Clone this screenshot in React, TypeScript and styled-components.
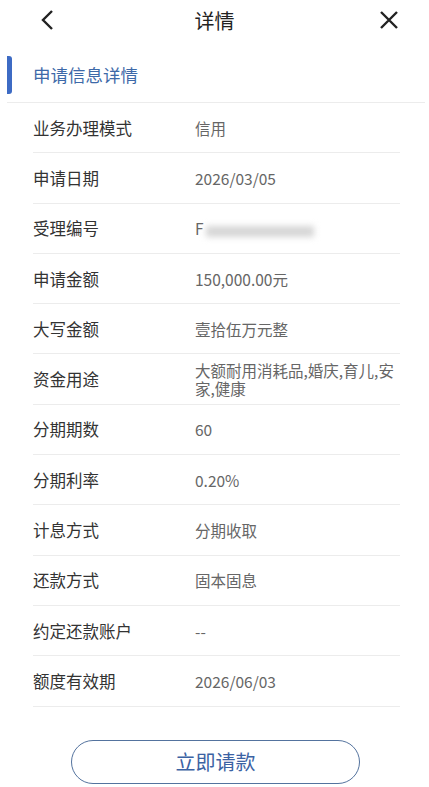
import React from "react";
import styled, { createGlobalStyle } from "styled-components";

const GlobalStyle = createGlobalStyle`
  body {
    margin: 0;
    background: #fff;
    font-family: "Noto Sans CJK SC", "Noto Sans", sans-serif;
  }
`;

const Page = styled.div`
  width: 429px;
  height: 787px;
  overflow: hidden;
  background: #fff;
`;

const TopBar = styled.header`
  height: 40px;
  display: grid;
  grid-template-columns: 60px 1fr 60px;
  align-items: center;
`;

const Title = styled.h1`
  margin: 0;
  text-align: center;
  font-size: 20px;
  font-weight: 400;
  color: #222;
`;

const IconBox = styled.div<{ $right?: boolean }>`
  display: flex;
  justify-content: ${(p) => (p.$right ? "flex-start" : "flex-end")};
  padding: ${(p) => (p.$right ? "0 0 0 10px" : "0 4px 0 0")};
`;

const SectionHead = styled.div`
  margin-top: 15px;
  height: 47px;
  display: flex;
  align-items: center;
  margin-left: 7px;
  border-bottom: 1px solid #ececec;
  margin-right: 4px;
`;

const Marker = styled.span`
  width: 5px;
  height: 38px;
  border-radius: 0 3px 3px 0;
  background: #3d6bc4;
  margin-right: 21px;
  margin-top: -8px;
`;

const SectionTitle = styled.span`
  font-size: 17.5px;
  color: #3d69a8;
  margin-top: -8px;
`;

const List = styled.div`
  padding: 0 29px 0 33px;
`;

const Row = styled.div`
  box-sizing: border-box;
  height: 50.3px;
  display: grid;
  grid-template-columns: 162px 1fr;
  align-items: center;
  border-bottom: 1px solid #ececec;
`;

const Label = styled.span`
  font-size: 16.5px;
  color: #333;
`;

const Value = styled.span`
  font-size: 15.5px;
  color: #666;
  line-height: 18px;
`;

const Blur = styled.span`
  display: inline-block;
  vertical-align: middle;
  width: 108px;
  height: 11px;
  margin-left: 2px;
  background: #d6d6d6;
  filter: blur(3px);
`;

const Footer = styled.div`
  display: flex;
  justify-content: center;
  padding-top: 33px;
`;

const ActionButton = styled.button`
  width: 289px;
  height: 44px;
  border-radius: 22px;
  border: 1.5px solid #54739e;
  background: #fff;
  color: #3b62a3;
  font-family: inherit;
  font-size: 20px;
  margin-left: 2px;
`;

const rows: [string, React.ReactNode][] = [
  ["业务办理模式", "信用"],
  ["申请日期", "2026/03/05"],
  [
    "受理编号",
    <>
      F<Blur />
    </>,
  ],
  ["申请金额", "150,000.00元"],
  ["大写金额", "壹拾伍万元整"],
  ["资金用途", "大额耐用消耗品,婚庆,育儿,安家,健康"],
  ["分期期数", "60"],
  ["分期利率", "0.20%"],
  ["计息方式", "分期收取"],
  ["还款方式", "固本固息"],
  ["约定还款账户", "--"],
  ["额度有效期", "2026/06/03"],
];

export default function App() {
  return (
    <Page>
      <GlobalStyle />
      <TopBar>
        <IconBox>
          <svg width="17" height="22" viewBox="0 0 17 22">
            <path d="M13 2 L4 11 L13 20" fill="none" stroke="#222" strokeWidth="2.4" />
          </svg>
        </IconBox>
        <Title>详情</Title>
        <IconBox $right>
          <svg width="20" height="20" viewBox="0 0 20 20">
            <path d="M2 2 L18 18 M18 2 L2 18" stroke="#222" strokeWidth="2.4" />
          </svg>
        </IconBox>
      </TopBar>
      <SectionHead>
        <Marker />
        <SectionTitle>申请信息详情</SectionTitle>
      </SectionHead>
      <List>
        {rows.map(([k, v]) => (
          <Row key={k}>
            <Label>{k}</Label>
            <Value>{v}</Value>
          </Row>
        ))}
      </List>
      <Footer>
        <ActionButton>立即请款</ActionButton>
      </Footer>
    </Page>
  );
}
